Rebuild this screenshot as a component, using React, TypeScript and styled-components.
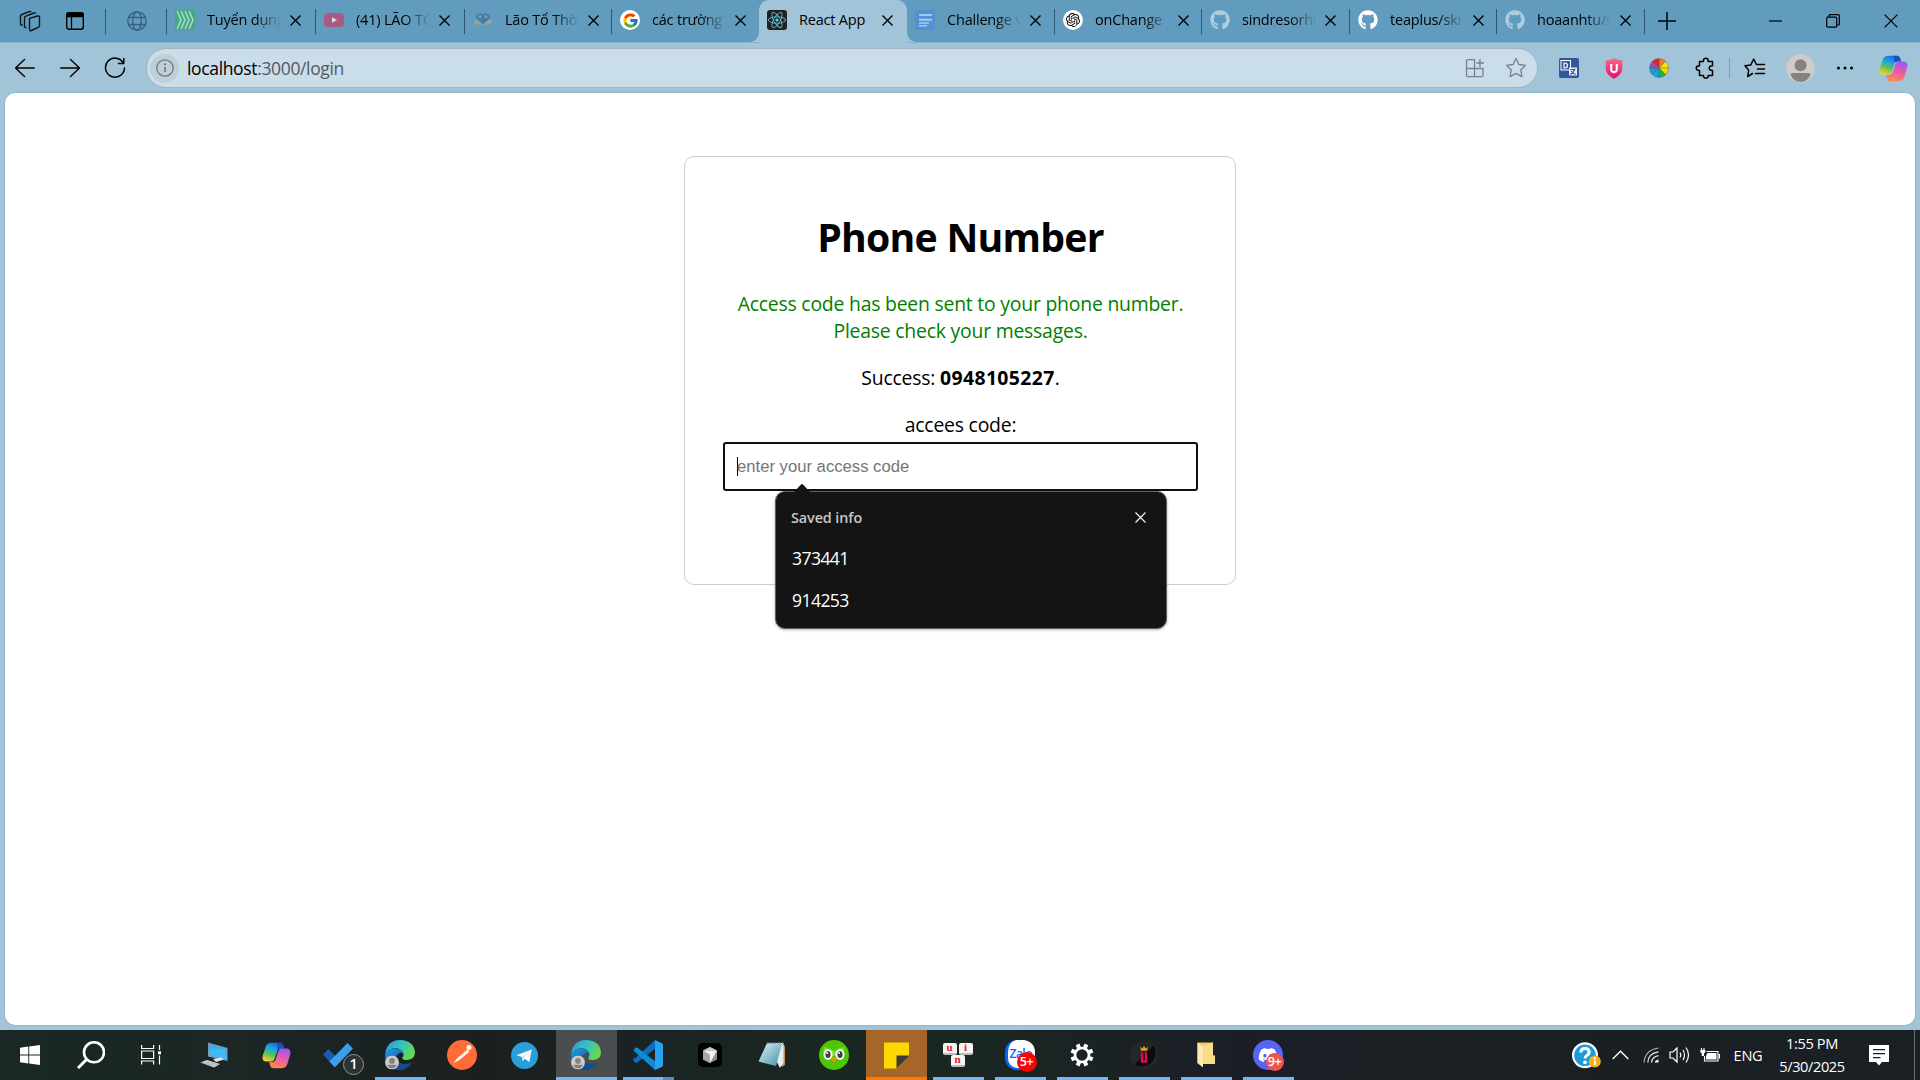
import React from "react";
import styled, { createGlobalStyle, css } from "styled-components";
import { FaGithub, FaReact, FaDiscord } from "react-icons/fa";
import { FcGoogle } from "react-icons/fc";
import { SiOpenai } from "react-icons/si";

const Global = createGlobalStyle`
  *, *::before, *::after { box-sizing: border-box; }
  html, body { margin: 0; padding: 0; overflow: hidden; }
  body { font-family: "Open Sans", "Noto Sans", sans-serif; color: #000; }
  svg { display: block; flex: none; }
`;

const Screen = styled.div`
  width: 1920px;
  height: 1080px;
  display: flex;
  flex-direction: column;
  background: #a2c4d9;
  overflow: hidden;
`;

/* ---------- tab strip ---------- */

const TabStrip = styled.div`
  height: 43px;
  display: flex;
  background: #619cbf;
  border-bottom: 1px solid #84b1cc;
`;

const StripSlot = styled.div<{ $w: number; $line?: boolean }>`
  width: ${(p) => p.$w}px;
  height: 41px;
  flex: none;
  display: flex;
  align-items: center;
  justify-content: center;
  background: ${(p) =>
    p.$line ? "linear-gradient(#2f566f, #2f566f) right 9px / 1px 25px no-repeat" : "none"};
`;

const Tab = styled.div<{ $w: number; $active?: boolean; $line?: boolean }>`
  width: ${(p) => p.$w}px;
  height: 43px;
  flex: none;
  position: relative;
  display: flex;
  align-items: center;
  padding: 0 0 3px 8px;
  border-radius: 10px 10px 0 0;
  background: ${(p) =>
    p.$active
      ? "#a2c4d9"
      : p.$line
        ? "linear-gradient(#2f566f, #2f566f) right 9px / 1px 25px no-repeat"
        : "none"};
  ${(p) =>
    p.$active &&
    css`
      &::before,
      &::after {
        content: "";
        position: absolute;
        bottom: 1px;
        width: 9px;
        height: 9px;
      }
      &::before {
        left: -9px;
        background: radial-gradient(circle at 0 0, transparent 8.5px, #a2c4d9 9px);
      }
      &::after {
        right: -9px;
        background: radial-gradient(circle at 100% 0, transparent 8.5px, #a2c4d9 9px);
      }
    `}
`;

const TabIcon = styled.span<{ $faded?: boolean }>`
  width: 20px;
  height: 20px;
  flex: none;
  display: flex;
  align-items: center;
  justify-content: center;
  opacity: ${(p) => (p.$faded ? 0.5 : 1)};
`;

const TabTitle = styled.span<{ $fade: boolean }>`
  width: 74px;
  margin: 0 9px 0 12px;
  font-size: 14.5px;
  line-height: 22px;
  white-space: nowrap;
  overflow: hidden;
  letter-spacing: -0.2px;
  ${(p) => p.$fade && "mask-image: linear-gradient(90deg, #000 48px, transparent 74px);"}
`;

const RoundIcon = styled.span`
  width: 20px;
  height: 20px;
  border-radius: 50%;
  background: #fff;
  display: flex;
  align-items: center;
  justify-content: center;
`;

const DarkIcon = styled(RoundIcon)`
  border-radius: 3px;
  background: #222;
`;

const WindowButtons = styled.div`
  margin-left: auto;
  display: flex;
`;

/* ---------- toolbar ---------- */

const Toolbar = styled.div`
  height: 50px;
  display: flex;
  align-items: center;
  flex: none;
`;

const ToolSlot = styled.div<{ $w: number }>`
  width: ${(p) => p.$w}px;
  flex: none;
  display: flex;
  align-items: center;
  justify-content: center;
`;

const AddressBar = styled.div`
  width: 1392px;
  height: 40px;
  flex: none;
  display: flex;
  align-items: center;
  margin-left: 6px;
  border: 1px solid #a5b2bd;
  border-radius: 20px;
  background: #cadee9;
  padding: 0 1px 0 3px;
`;

const InfoBadge = styled.span`
  width: 29px;
  height: 29px;
  border-radius: 50%;
  background: #bfcfda;
  display: flex;
  align-items: center;
  justify-content: center;
`;

const Url = styled.span`
  margin-left: 8px;
  flex: 1;
  font-size: 17.5px;
  line-height: 24px;
  letter-spacing: -0.35px;
  color: #505b63;
  b {
    font-weight: 400;
    color: #000;
  }
`;

const Divider = styled.span`
  width: 1px;
  height: 20px;
  background: #7f9bac;
`;

/* ---------- page ---------- */

const Page = styled.main`
  height: 932px;
  margin: 0 5px 5px;
  flex: none;
  display: flex;
  justify-content: center;
  align-items: flex-start;
  padding-top: 63px;
  background: #fff;
  border-radius: 10px;
  box-shadow: 0 0 2px #7b9db1;
`;

const Card = styled.section`
  width: 552px;
  height: 429px;
  border: 1px solid #ccc;
  border-radius: 10px;
  padding: 53px 37px 0 38px;
  text-align: center;
  font-size: 19.4px;
  line-height: 27px;
  letter-spacing: -0.22px;
`;

const Heading = styled.h1`
  margin: 0 0 27px;
  font-size: 39.2px;
  line-height: 53px;
  font-weight: 700;
  letter-spacing: -0.75px;
`;

const Note = styled.p<{ $success?: boolean }>`
  margin: 0 0 20px;
  color: ${(p) => (p.$success ? "green" : "#000")};
  b {
    letter-spacing: 0.4px;
  }
`;

const Label = styled.label`
  display: block;
  margin-bottom: 4px;
`;

const Field = styled.div`
  position: relative;
  height: 49px;
  border: 2px solid #101010;
  border-radius: 3px;
  display: flex;
  align-items: center;
  padding: 0 12px;
  letter-spacing: 0;
`;

const Caret = styled.span`
  width: 1px;
  height: 19px;
  margin-right: -1px;
  background: #000;
`;

const Placeholder = styled.span`
  font: 16.67px/20px "Liberation Sans", Arial, sans-serif;
  color: #757575;
`;

const Popup = styled.div`
  position: absolute;
  left: 50px;
  top: 47px;
  width: 392px;
  height: 138px;
  border: 1px solid #5f5f5f;
  border-radius: 10px;
  background: #141414;
  box-shadow: 0 1px 3px rgba(0, 0, 0, 0.3);
  padding: 12px 20px 0 15px;
  text-align: left;
  color: #fff;
`;

const PopupArrow = styled.svg`
  position: absolute;
  left: 17px;
  top: -9px;
`;

const PopupHead = styled.div`
  display: flex;
  align-items: center;
  justify-content: space-between;
  height: 26px;
  margin-bottom: 7px;
  color: #c8c8c8;
  font-size: 14.4px;
  font-weight: 600;
  letter-spacing: -0.1px;
`;

const PopupItem = styled.div`
  height: 42px;
  padding-left: 1px;
  display: flex;
  align-items: center;
  font-size: 17.6px;
  letter-spacing: -0.6px;
`;

/* ---------- taskbar ---------- */

const Taskbar = styled.footer`
  height: 50px;
  flex: none;
  display: flex;
  color: #fff;
  background: linear-gradient(
    90deg,
    #1a2724 0,
    #1b2625 240px,
    #1c1f20 480px,
    #1a2424 660px,
    #1a2721 860px,
    #1a2622 1000px,
    #1b1e27 1240px,
    #1d2124 1420px,
    #191f23 1620px,
    #1b2025 1920px
  );
`;

const bars = {
  none: "none",
  run: "linear-gradient(#76b5ee, #76b5ee) 6px 47px / 51px 3px no-repeat",
  stack:
    "linear-gradient(#76b5ee, #76b5ee) 6px 47px / 40px 3px no-repeat, linear-gradient(#5b8cb8, #5b8cb8) 46px 47px / 11px 3px no-repeat",
  active:
    "linear-gradient(#76b5ee, #76b5ee) 0 47px / 61px 3px no-repeat, linear-gradient(#4b4e4e, #4b4e4e) 0 0 / 61px 47px no-repeat",
  alert:
    "linear-gradient(#ff7800, #ff7800) 0 47px / 61px 3px no-repeat, linear-gradient(#a66529, #a66529) 0 0 / 61px 47px no-repeat",
};

const TaskButton = styled.div<{ $w?: number; $bar?: keyof typeof bars }>`
  width: ${(p) => p.$w ?? 62}px;
  height: 50px;
  flex: none;
  display: flex;
  align-items: center;
  justify-content: center;
  padding-right: 1px;
  background: ${(p) => bars[p.$bar ?? "none"]};
`;

const IconStack = styled.span`
  position: relative;
  display: flex;
`;

const Badge = styled.span<{ $bg: string; $x: number; $y: number; $size: number; $ring?: boolean }>`
  position: absolute;
  left: ${(p) => p.$x}px;
  top: ${(p) => p.$y}px;
  width: ${(p) => p.$size}px;
  height: ${(p) => p.$size}px;
  border-radius: 50%;
  border: ${(p) => (p.$ring ? "1px solid #8d9494" : "none")};
  background: ${(p) => p.$bg};
  color: #fff;
  font-size: ${(p) => (p.$ring ? 14.5 : 12.5)}px;
  line-height: 1;
  font-weight: 600;
  letter-spacing: -0.3px;
  display: flex;
  align-items: center;
  justify-content: center;
`;

const Tray = styled.div`
  margin-left: auto;
  display: flex;
  align-items: center;
  font-size: 14.6px;
`;

const TraySlot = styled.div<{ $w: number }>`
  width: ${(p) => p.$w}px;
  display: flex;
  justify-content: center;
  letter-spacing: -0.3px;
`;

const Clock = styled.div`
  width: 82px;
  text-align: center;
  line-height: 23px;
  letter-spacing: -0.4px;
`;

const ShowDesktop = styled.div`
  width: 6px;
  height: 50px;
  margin-left: 9px;
  border-left: 1px solid #6a6f72;
`;

/* ---------- icons ---------- */

const Cross = ({ s = 11, w = 1.4, c = "#000" }: { s?: number; w?: number; c?: string }) => (
  <svg width={s} height={s} viewBox="0 0 11 11" stroke={c} strokeWidth={w} fill="none">
    <path d="M.5.5l10 10M10.5.5l-10 10" />
  </svg>
);

const WorkspacesIcon = () => (
  <svg width="22" height="22" viewBox="0 0 22 22" fill="none" stroke="#0b141a" strokeWidth="1.4" strokeLinejoin="round">
    <path d="M10.5 8.3l8-2.3c1.2-.3 2 .3 2 1.400v8c0 1-.5 1.600-1.400 1.900l-6.600 3.200c-1.200.5-2 0-2-1.200z" />
    <path d="M7.500 17.500c-1.200.3-2-.2-2-1.300V8c0-1 .5-1.600 1.400-1.900l8-3.100c.8-.3 1.600 0 1.900.6" />
    <path d="M3.800 15c-1.500.4-2.300-.1-2.300-1.400V6.400c0-1 .4-1.600 1.300-1.900l7.400-2.900c.9-.3 1.600-.1 2 .5" />
  </svg>
);

const TabActionsIcon = () => (
  <svg width="20" height="20" viewBox="0 0 20 20">
    <rect x="1.700" y="1.700" width="16.600" height="16.600" rx="2.500" fill="none" stroke="#000" strokeWidth="1.400" />
    <path d="M1 6.200V4a3 3 0 013-3h12a3 3 0 013 3v2.200z" />
    <path d="M6.500 6v12" stroke="#000" strokeWidth="1.300" />
  </svg>
);

const GlobeIcon = () => (
  <svg width="20" height="20" viewBox="0 0 20 20" fill="none" stroke="#33607d" strokeWidth="1.300">
    <circle cx="10" cy="10" r="9.200" />
    <ellipse cx="10" cy="10" rx="4.300" ry="9.200" />
    <path d="M1.700 6.500h16.600M1.700 13.500h16.600" />
  </svg>
);

const ChevronsIcon = () => (
  <svg width="20" height="20" viewBox="0 0 20 20">
    <rect width="20" height="20" rx="2.500" fill="#43a884" />
    <g fill="none" stroke="#a9d8c8" strokeWidth="1.600">
      <path d="M2 1l4 9-4 9M6 1l4 9-4 9M10 1l4 9-4 9M14 1l4 9-4 9" />
    </g>
  </svg>
);

const YoutubeIcon = () => (
  <svg width="20" height="20" viewBox="0 0 20 20">
    <rect y="3" width="20" height="14" rx="3.500" fill="#ac5984" />
    <path d="M8 7.200l5 2.800-5 2.800z" fill="#d9dfe8" />
  </svg>
);

const BookIcon = () => (
  <svg width="20" height="20" viewBox="0 0 20 20">
    <path d="M1 10l4-1 5 4 5-4 4 1-1 5-5-1-3 2-3-2-5 1z" fill="#94a49a" />
    <path d="M3.500 5q3-3 6.500-.5Q13.500 2 16.500 5q1.500 3-1.500 5l-5 4.500L5 10Q2 8 3.500 5z" fill="#4a7cab" />
    <circle cx="7" cy="6.700" r="1.600" fill="#6a9dc2" />
    <circle cx="13" cy="6.700" r="1.600" fill="#6a9dc2" />
  </svg>
);

const DocsIcon = () => (
  <svg width="20" height="20" viewBox="0 0 20 20">
    <rect width="20" height="20" rx="2.500" fill="#5290d8" />
    <path d="M4 5h13M4 9.800h13" stroke="#a9c9e8" strokeWidth="2" />
    <path d="M4 12.900h10M4 15.800h8" stroke="#a9c9e8" strokeWidth="1.500" />
  </svg>
);

const ArrowIcon = ({ flip }: { flip?: boolean }) => (
  <svg width="20" height="20" viewBox="0 0 20 20" fill="none" stroke="#000" strokeWidth="1.400" strokeLinecap="round" strokeLinejoin="round">
    <path d={flip ? "M.7 10h18.600M10.500 1.500l9 8.500-9 8.500" : "M19.300 10H.7M9.500 1.500L.5 10l9 8.500"} />
  </svg>
);

const RefreshIcon = () => (
  <svg width="22" height="22" viewBox="0 0 22 22" fill="none" stroke="#000" strokeWidth="1.500" strokeLinecap="round" strokeLinejoin="round">
    <path d="M19.300 6A9.500 9.500 0 1020.500 11" />
    <path d="M19.800 1.500v5h-5.300" />
  </svg>
);

const InfoIcon = () => (
  <svg width="18" height="18" viewBox="0 0 18 18">
    <circle cx="9" cy="9" r="8.200" fill="none" stroke="#6f777d" strokeWidth="1.300" />
    <path d="M9 8v5" stroke="#6f777d" strokeWidth="1.600" />
    <circle cx="9" cy="5.300" r="1.100" fill="#6f777d" />
  </svg>
);

const AppsIcon = () => (
  <svg width="20" height="20" viewBox="0 0 20 20" fill="none" stroke="#74838d" strokeWidth="1.300">
    <path d="M9.500 10.500V1.700H3A1.500 1.500 0 001.500 3.200v14A1.500 1.500 0 003 18.700h13.500a1.500 1.500 0 001.500-1.500v-6.700H1.500M9.500 10.500v8.200" />
    <path d="M15 1v8M11.500 5h7.500" />
  </svg>
);

const StarIcon = () => (
  <svg width="22" height="22" viewBox="0 0 22 22" fill="none" stroke="#74838d" strokeWidth="1.300" strokeLinejoin="round">
    <path d="M11 1.500l2.900 6 6.600.9-4.800 4.600 1.200 6.600-5.900-3.200-5.900 3.200 1.200-6.600L1.500 8.400l6.600-.9z" />
  </svg>
);

const TranslateIcon = () => (
  <svg width="20" height="20" viewBox="0 0 20 20">
    <rect width="20" height="20" rx="2" fill="#36549b" />
    <rect x="2" y="2.500" width="9.500" height="9.500" fill="none" stroke="#fff" strokeWidth="1" />
    <path d="M5 5v5h1.200q2.300-.3 2.300-2.500T6.200 5z" fill="none" stroke="#fff" strokeWidth="1.200" />
    <path d="M10 9.500h8v8h-8z" fill="#e7ecf6" />
    <path d="M11.200 11.500h5.300M15.500 11.500q-1 3.500-4.300 5M12 13q2 2.500 4.800 3.500" fill="none" stroke="#36549b" strokeWidth="1.200" />
  </svg>
);

const ShieldIcon = () => (
  <svg width="18" height="21" viewBox="0 0 18 21">
    <defs>
      <linearGradient id="shield" x2="0" y2="1">
        <stop stopColor="#f96a8d" />
        <stop offset="1" stopColor="#e0106b" />
      </linearGradient>
    </defs>
    <path d="M9 .3q4 2 8.300 2.300v8.500q-.5 6-8.300 9.600Q1.200 17 .7 11.100V2.600Q5 2.300 9 .3z" fill="url(#shield)" />
    <path d="M6.200 6v5.500q.2 2.600 2.800 2.700 2.600-.1 2.800-2.700V6" fill="none" stroke="#fff" strokeWidth="2" />
  </svg>
);

const wheel = ["#f07a22", "#fde400", "#f9d800", "#22b14c", "#18a5e8", "#189be0", "#9a4bab", "#e4202b"];
const WheelIcon = () => (
  <svg width="20" height="20" viewBox="-10 -10 20 20">
    {wheel.map((c, i) => {
      const a = ((i * 45 - 90) * Math.PI) / 180;
      const b = a + Math.PI / 4;
      return (
        <path
          key={c}
          d={`M0 0L${9.5 * Math.cos(a)} ${9.5 * Math.sin(a)}A9.500 9.500 0 0 1 ${9.5 * Math.cos(b)} ${9.5 * Math.sin(b)}z`}
          fill={c}
          stroke="#4a5a50"
          strokeWidth=".4"
        />
      );
    })}
  </svg>
);

const PuzzleIcon = () => (
  <svg width="20" height="22" viewBox="0 0 20 22" fill="none" stroke="#000" strokeWidth="1.500" strokeLinejoin="round">
    <path d="M4.500 4.500h4Q8.200 1.200 10.800 1.200T13.200 4.500h4.300v4.300q-3.300-.2-3.300 2.300t3.300 2.400v5h-4.300q.2 2.600-2.300 2.600t-2.400-2.600h-4v-5Q1.200 13.500 1.200 11.200T4.500 8.800z" />
  </svg>
);

const FavoritesIcon = () => (
  <svg width="22" height="22" viewBox="0 0 22 22" fill="none" stroke="#000" strokeWidth="1.500" strokeLinejoin="round" strokeLinecap="round">
    <path d="M8.500 16.500l-4.800 3 1-6.300L1 8.800l5.800-.9 2.900-5.900 2.700 5.500h8.100M13.500 12h7M11.500 16.500h9" />
  </svg>
);

const AvatarIcon = ({ s = 29 }: { s?: number }) => (
  <svg width={s} height={s} viewBox="0 0 29 29">
    <circle cx="14.500" cy="14.500" r="14.300" fill="#cfcbc7" />
    <circle cx="14.500" cy="11.200" r="6" fill="#86827e" />
    <path d="M4.500 20.500Q4.500 19 6.500 19h16q2 0 2 1.500-3 7.500-10 7.500T4.500 20.500z" fill="#86827e" />
  </svg>
);

const DotsIcon = () => (
  <svg width="18" height="4" viewBox="0 0 18 4">
    <circle cx="2.500" cy="2" r="1.500" />
    <circle cx="9" cy="2" r="1.500" />
    <circle cx="15.500" cy="2" r="1.500" />
  </svg>
);

const CopilotIcon = ({ id }: { id: string }) => (
  <svg width="29" height="27" viewBox="0 0 29 27">
    <defs>
      <linearGradient id={`${id}a`} x1=".7" y1="0" x2=".3" y2="1">
        <stop stopColor="#1a63d8" />
        <stop offset=".35" stopColor="#18a4e8" />
        <stop offset=".65" stopColor="#58c25a" />
        <stop offset="1" stopColor="#f5d024" />
      </linearGradient>
      <linearGradient id={`${id}b`} x1=".6" y1="0" x2=".3" y2="1">
        <stop stopColor="#9b59f0" />
        <stop offset=".45" stopColor="#e85aa8" />
        <stop offset="1" stopColor="#ff8a4a" />
      </linearGradient>
    </defs>
    <path d="M10 .8h7.500q2.500 0 3.300 2.500l1 3.200h-3.300q-2.300 0-3 2.300l-2.800 8q-.9 2.700-3.500 2.700H4Q-.5 19 .8 13.500l3-9Q5 .8 10 .8z" fill={`url(#${id}a)`} />
    <path d="M15 .8h3.500q2 .3 2.700 2.500l1 3.200h-4.500q-1.500 0-2.300 1.500z" fill="#1b50bd" />
    <path d="M19 26.200h-7.500q-2.500 0-3.300-2.500l-1-3.700h3.300q2.300 0 3-2.300l2.800-8.500q.9-2.700 3.500-2.700H25q4.500 1 3.200 6l-3 10q-1.200 3.700-6.200 3.700z" fill={`url(#${id}b)`} />
  </svg>
);

const WindowsIcon = () => (
  <svg width="20" height="20" viewBox="0 0 20 20" fill="#fff">
    <path d="M0 2.700L8.300 1.500V9.500H0zM9.200 1.400L20 0v9.500H9.200zM0 10.400h8.300v8.100L0 17.300zM9.200 10.400H20V20L9.200 18.600z" />
  </svg>
);

const SearchIcon = () => (
  <svg width="28" height="28" viewBox="0 0 28 28" fill="none" stroke="#fff">
    <circle cx="17" cy="11.300" r="10" strokeWidth="2.600" />
    <path d="M9.500 18.500L1 27" strokeWidth="3" />
  </svg>
);

const TaskViewIcon = () => (
  <svg width="21" height="20" viewBox="0 0 21 20" fill="none" stroke="#fff" strokeWidth="1.200">
    <path d="M.6 0v3.500h12V0M.6 19.500V16h12v3.500M.6 6h12v7.500H.6zM18.500 0v5M18.500 10.500v9" />
    <path d="M17 6.300h3v3h-3z" fill="#fff" stroke="none" />
  </svg>
);

const ComputerIcon = () => (
  <svg width="28" height="26" viewBox="0 0 28 26">
    <path d="M8 .5L27.500 6v13L8 14.500z" fill="#7f98a8" />
    <path d="M9 2L26.500 7v10.500L9 13.300z" fill="#35aef5" />
    <path d="M9 8L26.500 7v10.500L9 13.300z" fill="#53c0fa" opacity=".5" />
    <path d="M13 17l8-1.500 3 2-8 2.500z" fill="#dfe5e8" />
    <path d="M.5 20.500L7 18l13 4-6 3.500z" fill="#cfd6da" />
    <path d="M3 20.500l12 3.500M6 19.500l12 3.300" stroke="#8a969d" strokeWidth=".6" />
  </svg>
);

const TodoIcon = () => (
  <svg width="30" height="25" viewBox="0 0 30 25">
    <path d="M0 11.500L5.500 6l9 9.500L11.500 24z" fill="#195abd" />
    <path d="M24.500 0L30 5.500 12 24.300 6.300 18.500z" fill="#3f9ce9" />
  </svg>
);

const EdgeIcon = ({ id }: { id: string }) => (
  <svg width="30" height="30" viewBox="0 0 30 30">
    <defs>
      <linearGradient id={`${id}t`} x2="1" y2=".5">
        <stop stopColor="#2596d8" />
        <stop offset=".5" stopColor="#34c1c4" />
        <stop offset="1" stopColor="#66d84e" />
      </linearGradient>
      <linearGradient id={`${id}b`} x2=".6" y2="1">
        <stop stopColor="#1b9de2" />
        <stop offset="1" stopColor="#0e55a8" />
      </linearGradient>
    </defs>
    <path d="M.3 14Q1.500.5 15 0q14 .5 15 12.500-.3 7-8 7.500-5 0-4.800-2.300 1.800-1.500 1.200-4Q17 9 11 8 4 8 .3 14z" fill={`url(#${id}t)`} />
    <path d="M0 15Q2 8.500 10 8.300q7 .3 8.500 5.400-3-2-6 .8-2.500 3-.5 7.500 3 6 8 7.200-2.500.8-5 .8Q.5 29.500 0 15z" fill={`url(#${id}b)`} />
    <path d="M12 15q-1.500 4 1.500 7 5 3.500 13.500.5-4 7-12 7.500Q6 27 12 15z" fill="#134b8f" />
    <svg x="0" y="15.500" width="14" height="14" viewBox="0 0 29 29">
      <circle cx="14.500" cy="14.500" r="14.300" fill="#cfcbc7" />
      <circle cx="14.500" cy="11.200" r="6" fill="#86827e" />
      <path d="M5 20.500Q5 19 7 19h15q2 0 2 1.500-3 6-9.500 6T5 20.500z" fill="#86827e" />
    </svg>
  </svg>
);

const PostmanIcon = () => (
  <svg width="30" height="30" viewBox="0 0 30 30">
    <circle cx="15" cy="15" r="15" fill="#ff6c37" />
    <circle cx="22" cy="7.500" r="2.500" fill="#fff" />
    <path d="M20 9.500l2.500 2L12.500 20l-6 3 3.500-4.500z" fill="#fff" />
    <path d="M13 16l7-6" stroke="#ff6c37" strokeWidth=".6" />
  </svg>
);

const TelegramIcon = () => (
  <svg width="27" height="27" viewBox="0 0 27 27">
    <circle cx="13.500" cy="13.500" r="13.500" fill="#2a9fd9" />
    <path d="M5.500 13.200L20.800 7.500l-2.500 12.500-4.500-3.300-2.400 2.300-.4-4z" fill="#fff" />
    <path d="M11 15l7-5-5.500 6-1.100 3z" fill="#c8dcea" />
  </svg>
);

const VsCodeIcon = () => (
  <svg width="30" height="30" viewBox="0 0 30 30">
    <path d="M22 0L2.500 18l-2 .5L0 20l2 2.500 1.800.2L23 8z" fill="#0a6fc0" />
    <path d="M22 30L.5 10.500l1.800-2.800 1.800-.2L23 22z" fill="#0f8ad8" />
    <path d="M22 0v30l7-3.100 1-1.400v-21l-1-1.300z" fill="#26a2ee" />
  </svg>
);

const CubeIcon = () => (
  <svg width="24" height="24" viewBox="0 0 24 24">
    <rect width="24" height="24" rx="5" fill="#000" />
    <path d="M12 4l7 3.500v9L12 20l-7-3.500v-9z" fill="#8d8d8d" />
    <path d="M5 7.500h14L12 20v-8z" fill="#f2f2f2" />
    <path d="M12 4l7 3.500H5z" fill="#c9c9c9" />
    <path d="M5 7.500l7 4.500v8l-7-3.500z" fill="#a7a7a7" />
  </svg>
);

const NotepadIcon = () => (
  <svg width="28" height="27" viewBox="0 0 28 27">
    <defs>
      <linearGradient id="note" x2="1" y2="1">
        <stop stopColor="#dff1f3" />
        <stop offset="1" stopColor="#3d93a6" />
      </linearGradient>
    </defs>
    <path d="M24 2l3 2v19l-3 2z" fill="#b8925a" />
    <path d="M9 1h16.500v20L22 26z" fill="#e8eef0" />
    <path d="M9 1l15 1-6 22L.5 19.500z" fill="url(#note)" />
    <path d="M9 1h17" stroke="#6c7478" strokeWidth="1.600" strokeDasharray="1.500 1" />
  </svg>
);

const DuoIcon = () => (
  <svg width="30" height="30" viewBox="0 0 30 30">
    <circle cx="15" cy="15" r="15" fill="#4ec604" />
    <path d="M5 7q5 .5 10 4 5-3.500 10-4 1 5-1 9H6Q4 12 5 7z" fill="#7be332" />
    <ellipse cx="9" cy="14.500" rx="4.500" ry="5.200" fill="#fff" />
    <ellipse cx="21" cy="14.500" rx="4.500" ry="5.200" fill="#fff" />
    <ellipse cx="9" cy="14.500" rx="2.600" ry="3.600" fill="#3f3f3f" />
    <ellipse cx="21" cy="14.500" rx="2.600" ry="3.600" fill="#3f3f3f" />
    <circle cx="8.200" cy="13" r="1" fill="#fff" />
    <circle cx="20.200" cy="13" r="1" fill="#fff" />
    <path d="M12.300 18.500q2.700-2.500 5.400 0-.5 3-2.700 3.500-2.200-.5-2.700-3.500z" fill="#f49000" />
  </svg>
);

const StickyIcon = () => (
  <svg width="27" height="27" viewBox="0 0 27 27">
    <path d="M1 .5h25v13L13.500 26.500H1z" fill="#fdd800" />
    <path d="M13.500 13.500h13L13.500 26.500z" fill="#3b3a39" />
  </svg>
);

const Keys = styled.span`
  width: 30px;
  display: flex;
  flex-wrap: wrap;
  justify-content: center;
  gap: 0 2px;
`;

const Key = styled.span`
  width: 14px;
  height: 12px;
  border-radius: 2px;
  background: #f4f4f4;
  border-bottom: 2px solid #bdbdbd;
  color: #e01f2b;
  font: 700 11px/9px "Liberation Serif", serif;
  text-align: center;
`;

const Zalo = styled.span`
  width: 30px;
  height: 30px;
  border-radius: 12px;
  background: #fff;
  border-left: 3px solid #0068ff;
  border-bottom: 2px solid #0068ff;
  color: #0068ff;
  font-size: 12px;
  font-weight: 600;
  line-height: 27px;
  letter-spacing: -0.5px;
  overflow: hidden;
  padding-left: 2px;
`;

const DiscordDisc = styled.span`
  width: 30px;
  height: 30px;
  border-radius: 50%;
  background: #5865f2;
  display: flex;
  align-items: center;
  justify-content: center;
`;

const teeth = [0, 45, 90, 135, 180, 225, 270, 315];
const GearIcon = () => (
  <svg width="24" height="24" viewBox="-12 -12 24 24">
    <circle r="7" fill="none" stroke="#fff" strokeWidth="2.700" />
    {teeth.map((a) => (
      <rect key={a} x="-2" y="-11.500" width="4" height="4" fill="#fff" transform={`rotate(${a + 22.5})`} />
    ))}
  </svg>
);

const CrownIcon = () => (
  <svg width="28" height="28" viewBox="0 0 28 28">
    <circle cx="14" cy="14" r="13.800" fill="#262626" />
    <path d="M4.500 23.500a13.800 13.800 0 0019-19z" fill="#0b0b0b" />
    <path d="M11 9.800L10.300 6l2.200 1.400L14 4.800l1.500 2.600L17.700 6 17 9.800z" fill="#dba520" />
    <path d="M12 11.500v9.200h4v-9.200" fill="none" stroke="#f5005f" strokeWidth="2.200" />
  </svg>
);

const FolderIcon = () => (
  <svg width="18" height="26" viewBox="0 0 18 26">
    <path d="M.5.500H16v13h2v8.500H5z" fill="#f3cb66" />
    <path d="M5 4L16 .5v13l2 .5v8H5z" fill="#fbdc86" />
    <path d="M.3.500L6 4.500v21L.3 21z" fill="#ffe9ac" />
  </svg>
);

const HelpIcon = () => (
  <svg width="29" height="27" viewBox="0 0 29 27">
    <circle cx="13" cy="13.300" r="13" fill="#fff" />
    <circle cx="13" cy="13.300" r="10.800" fill="#1a9cd8" />
    <path d="M8.800 10.500q.2-4 4.200-4t4.200 3.500q0 2-2.100 3.300-2 1.200-2 3.200" fill="none" stroke="#fff" strokeWidth="3" />
    <circle cx="13" cy="20.300" r="1.900" fill="#fff" />
    <circle cx="22.800" cy="19.500" r="6" fill="#f3ae1b" />
    <path d="M22.800 18.500v4.500" stroke="#fff" strokeWidth="2" />
    <circle cx="22.800" cy="16.300" r="1.200" fill="#fff" />
  </svg>
);

const ChevronUp = () => (
  <svg width="17" height="10" viewBox="0 0 17 10" fill="none" stroke="#fff" strokeWidth="1.400">
    <path d="M.7 9L8.500 1.200 16.300 9" />
  </svg>
);

const WifiIcon = () => (
  <svg width="17" height="16" viewBox="0 0 17 16" fill="none" stroke="#e4e6e7" strokeWidth="1.200">
    <path d="M1 15.500Q2 3 15.500 1" opacity=".75" />
    <path d="M4.800 15.500Q5 6.500 15.500 4.800M8.500 15.500Q9 10 15.500 8.700" />
    <path d="M11.700 15.500q.5-2.500 3.800-3v3z" fill="#fff" stroke="none" />
  </svg>
);

const VolumeIcon = () => (
  <svg width="22" height="18" viewBox="0 0 22 18" fill="none" stroke="#fff" strokeWidth="1.200">
    <path d="M1 6h3l4-4v14l-4-4H1z" />
    <path d="M11 6.500q1.500 2.500 0 5M14 4q3 5 0 10M17 1.500q5 7.500 0 15" />
  </svg>
);

const BatteryIcon = () => (
  <svg width="20" height="15" viewBox="0 0 20 15" fill="none" stroke="#fff" strokeWidth="1.100">
    <path d="M6.500 3.500h11.500v9.500H4.500V8" />
    <path d="M18.500 6.500h1v3.500h-1" />
    <path d="M7.500 5h9v6.500H6V7.500z" fill="#fff" stroke="none" />
    <path d="M1.500 0v2M4 0v2" />
    <path d="M.3 2h5v2.300L4 5.600V8H1.800V5.600L.3 4.300z" fill="#fff" stroke="none" />
  </svg>
);

const NotificationIcon = () => (
  <svg width="20" height="21" viewBox="0 0 20 21">
    <path d="M0 0h20v17h-7l-3 3.500L7 17H0z" fill="#fff" />
    <path d="M4 4.700h12M4 8.700h12M4 12.700h7.500" stroke="#1b2025" strokeWidth="1.300" />
  </svg>
);

/* ---------- data ---------- */

type TabInfo = {
  title: string;
  w: number;
  icon: React.ReactNode;
  active?: boolean;
  line?: boolean;
  faded?: boolean;
};

const tabs: TabInfo[] = [
  { title: "Tuyển dụng", w: 149, icon: <ChevronsIcon />, line: true },
  { title: "(41) LÃO TỔ", w: 149, icon: <YoutubeIcon />, line: true },
  { title: "Lão Tổ Thờ", w: 147, icon: <BookIcon />, line: true },
  { title: "các trường", w: 147, icon: <RoundIcon><FcGoogle size={17} /></RoundIcon> },
  { title: "React App", w: 148, icon: <DarkIcon><FaReact size={18} color="#5fcfe8" /></DarkIcon>, active: true },
  { title: "Challenge v", w: 148, icon: <DocsIcon />, line: true },
  { title: "onChange", w: 147, icon: <RoundIcon><SiOpenai size={14} /></RoundIcon>, line: true },
  { title: "sindresorhu", w: 148, icon: <FaGithub size={20} color="#fff" />, faded: true, line: true },
  { title: "teaplus/ski", w: 147, icon: <FaGithub size={20} color="#fff" />, line: true },
  { title: "hoaanhtu/s", w: 148, icon: <FaGithub size={20} color="#fff" />, faded: true, line: true },
];

export default function App() {
  return (
    <Screen>
      <Global />
      <TabStrip>
        <StripSlot $w={60}><WorkspacesIcon /></StripSlot>
        <StripSlot $w={30}><TabActionsIcon /></StripSlot>
        <StripSlot $w={16} $line />
        <StripSlot $w={61} $line><GlobeIcon /></StripSlot>
        {tabs.map((t) => (
          <Tab key={t.title} $w={t.w} $active={t.active} $line={t.line}>
            <TabIcon $faded={t.faded}>{t.icon}</TabIcon>
            <TabTitle $fade={!t.active}>{t.title}</TabTitle>
            <Cross />
          </Tab>
        ))}
        <StripSlot $w={44}>
          <svg width="18" height="18" viewBox="0 0 18 18" stroke="#000" strokeWidth="1.500">
            <path d="M9 0v18M0 9h18" />
          </svg>
        </StripSlot>
        <WindowButtons>
          <StripSlot $w={58}>
            <svg width="13" height="2"><path d="M0 1h13" stroke="#000" strokeWidth="1.200" /></svg>
          </StripSlot>
          <StripSlot $w={58}>
            <svg width="14" height="14" viewBox="0 0 14 14" fill="none" stroke="#000" strokeWidth="1.200">
              <rect x=".7" y="3.200" width="10" height="10" rx="1" />
              <path d="M3 3V1.700q0-1 1-1h8.300q1 0 1 1V10q0 1-1 1H11" />
            </svg>
          </StripSlot>
          <StripSlot $w={58}><Cross s={14} w={1} /></StripSlot>
        </WindowButtons>
      </TabStrip>

      <Toolbar>
        <ToolSlot $w={50}><ArrowIcon /></ToolSlot>
        <ToolSlot $w={40}><ArrowIcon flip /></ToolSlot>
        <ToolSlot $w={50}><RefreshIcon /></ToolSlot>
        <AddressBar>
          <InfoBadge><InfoIcon /></InfoBadge>
          <Url><b>localhost</b>:3000/login</Url>
          <ToolSlot $w={40}><AppsIcon /></ToolSlot>
          <ToolSlot $w={41}><StarIcon /></ToolSlot>
        </AddressBar>
        <ToolSlot $w={62}><TranslateIcon /></ToolSlot>
        <ToolSlot $w={28}><ShieldIcon /></ToolSlot>
        <ToolSlot $w={62}><WheelIcon /></ToolSlot>
        <ToolSlot $w={29}><PuzzleIcon /></ToolSlot>
        <ToolSlot $w={20}><Divider /></ToolSlot>
        <ToolSlot $w={32}><FavoritesIcon /></ToolSlot>
        <ToolSlot $w={58}><AvatarIcon /></ToolSlot>
        <ToolSlot $w={32}><DotsIcon /></ToolSlot>
        <ToolSlot $w={64}><CopilotIcon id="cpTop" /></ToolSlot>
      </Toolbar>

      <Page>
        <Card>
          <Heading>Phone Number</Heading>
          <Note $success>
            Access code has been sent to your phone number.
            <br />
            Please check your messages.
          </Note>
          <Note>
            Success: <b>0948105227</b>.
          </Note>
          <Label>accees code:</Label>
          <Field>
            <Caret />
            <Placeholder>enter your access code</Placeholder>
            <Popup>
              <PopupArrow width="18" height="9" viewBox="0 0 18 9">
                <path d="M1 9L8 1.500q1-1 2 0L17 9z" fill="#141414" />
              </PopupArrow>
              <PopupHead>
                Saved info
                <Cross w={1.2} c="#f2f2f2" />
              </PopupHead>
              <PopupItem>373441</PopupItem>
              <PopupItem>914253</PopupItem>
            </Popup>
          </Field>
        </Card>
      </Page>

      <Taskbar>
        <TaskButton $w={61}><WindowsIcon /></TaskButton>
        <TaskButton $w={60}><SearchIcon /></TaskButton>
        <TaskButton $w={61}><TaskViewIcon /></TaskButton>
        <TaskButton $w={64}><ComputerIcon /></TaskButton>
        <TaskButton><CopilotIcon id="cpBar" /></TaskButton>
        <TaskButton $w={61}>
          <IconStack>
            <TodoIcon />
            <Badge $bg="#2c3335" $x={20} $y={11} $size={21} $ring>1</Badge>
          </IconStack>
        </TaskButton>
        <TaskButton $bar="run"><EdgeIcon id="edgeA" /></TaskButton>
        <TaskButton><PostmanIcon /></TaskButton>
        <TaskButton $w={63}><TelegramIcon /></TaskButton>
        <TaskButton $w={61} $bar="active"><EdgeIcon id="edgeB" /></TaskButton>
        <TaskButton $bar="stack"><VsCodeIcon /></TaskButton>
        <TaskButton><CubeIcon /></TaskButton>
        <TaskButton><NotepadIcon /></TaskButton>
        <TaskButton $w={63}><DuoIcon /></TaskButton>
        <TaskButton $w={61} $bar="alert"><StickyIcon /></TaskButton>
        <TaskButton $bar="run">
          <Keys><Key>u</Key><Key>i</Key><Key>n</Key></Keys>
        </TaskButton>
        <TaskButton $bar="run">
          <IconStack>
            <Zalo>Zalo</Zalo>
            <Badge $bg="#f70505" $x={12} $y={12} $size={20}>5+</Badge>
          </IconStack>
        </TaskButton>
        <TaskButton $bar="run"><GearIcon /></TaskButton>
        <TaskButton $bar="run"><CrownIcon /></TaskButton>
        <TaskButton $bar="run"><FolderIcon /></TaskButton>
        <TaskButton $bar="run">
          <IconStack>
            <DiscordDisc><FaDiscord size={20} color="#fff" /></DiscordDisc>
            <Badge $bg="#ed5555" $x={13} $y={13} $size={18}>9+</Badge>
          </IconStack>
        </TaskButton>
        <Tray>
          <TraySlot $w={34}><HelpIcon /></TraySlot>
          <TraySlot $w={34}><ChevronUp /></TraySlot>
          <TraySlot $w={28}><WifiIcon /></TraySlot>
          <TraySlot $w={30}><VolumeIcon /></TraySlot>
          <TraySlot $w={30}><BatteryIcon /></TraySlot>
          <TraySlot $w={46}>ENG</TraySlot>
          <Clock>
            1:55 PM
            <br />
            5/30/2025
          </Clock>
          <TraySlot $w={52}><NotificationIcon /></TraySlot>
          <ShowDesktop />
        </Tray>
      </Taskbar>
    </Screen>
  );
}
